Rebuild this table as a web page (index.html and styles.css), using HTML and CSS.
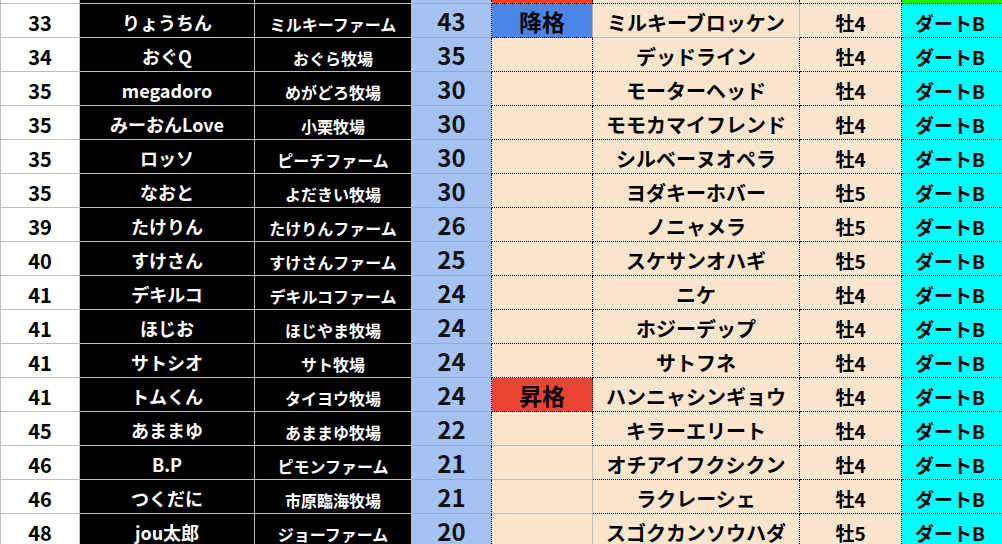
FILE: index.html
```html
<!DOCTYPE html>
<html lang="ja">
<head>
<meta charset="utf-8">
<title>ランキング</title>
<link rel="stylesheet" href="styles.css">
</head>
<body>
<div class="sheet">
  <div class="row top">
    <div class="cell a"></div><div class="cell b"></div><div class="cell c"></div><div class="cell d"></div>
    <div class="cell e up"></div><div class="cell f"></div><div class="cell g"></div><div class="cell h green"></div>
  </div>
  <div class="row">
    <div class="cell a">33</div><div class="cell b">りょうちん</div><div class="cell c">ミルキーファーム</div><div class="cell d">43</div>
    <div class="cell e down">降格</div><div class="cell f solid">ミルキーブロッケン</div><div class="cell g">牡4</div><div class="cell h">ダートB</div>
  </div>
  <div class="row">
    <div class="cell a">34</div><div class="cell b">おぐQ</div><div class="cell c">おぐら牧場</div><div class="cell d">35</div>
    <div class="cell e"></div><div class="cell f">デッドライン</div><div class="cell g">牡4</div><div class="cell h">ダートB</div>
  </div>
  <div class="row">
    <div class="cell a">35</div><div class="cell b">megadoro</div><div class="cell c">めがどろ牧場</div><div class="cell d">30</div>
    <div class="cell e"></div><div class="cell f">モーターヘッド</div><div class="cell g">牡4</div><div class="cell h">ダートB</div>
  </div>
  <div class="row">
    <div class="cell a">35</div><div class="cell b">みーおんLove</div><div class="cell c">小栗牧場</div><div class="cell d">30</div>
    <div class="cell e"></div><div class="cell f">モモカマイフレンド</div><div class="cell g">牡4</div><div class="cell h">ダートB</div>
  </div>
  <div class="row">
    <div class="cell a">35</div><div class="cell b">ロッソ</div><div class="cell c">ピーチファーム</div><div class="cell d">30</div>
    <div class="cell e"></div><div class="cell f">シルベーヌオペラ</div><div class="cell g">牡4</div><div class="cell h">ダートB</div>
  </div>
  <div class="row">
    <div class="cell a">35</div><div class="cell b">なおと</div><div class="cell c">よだきい牧場</div><div class="cell d">30</div>
    <div class="cell e"></div><div class="cell f">ヨダキーホバー</div><div class="cell g">牡5</div><div class="cell h">ダートB</div>
  </div>
  <div class="row">
    <div class="cell a">39</div><div class="cell b">たけりん</div><div class="cell c">たけりんファーム</div><div class="cell d">26</div>
    <div class="cell e"></div><div class="cell f">ノニャメラ</div><div class="cell g">牡5</div><div class="cell h">ダートB</div>
  </div>
  <div class="row">
    <div class="cell a">40</div><div class="cell b">すけさん</div><div class="cell c">すけさんファーム</div><div class="cell d">25</div>
    <div class="cell e"></div><div class="cell f">スケサンオハギ</div><div class="cell g">牡5</div><div class="cell h">ダートB</div>
  </div>
  <div class="row">
    <div class="cell a">41</div><div class="cell b">デキルコ</div><div class="cell c">デキルコファーム</div><div class="cell d">24</div>
    <div class="cell e"></div><div class="cell f">ニケ</div><div class="cell g">牡4</div><div class="cell h">ダートB</div>
  </div>
  <div class="row">
    <div class="cell a">41</div><div class="cell b">ほじお</div><div class="cell c">ほじやま牧場</div><div class="cell d">24</div>
    <div class="cell e"></div><div class="cell f">ホジーデップ</div><div class="cell g">牡4</div><div class="cell h">ダートB</div>
  </div>
  <div class="row">
    <div class="cell a">41</div><div class="cell b">サトシオ</div><div class="cell c">サト牧場</div><div class="cell d">24</div>
    <div class="cell e"></div><div class="cell f">サトフネ</div><div class="cell g">牡4</div><div class="cell h">ダートB</div>
  </div>
  <div class="row">
    <div class="cell a">41</div><div class="cell b">トムくん</div><div class="cell c">タイヨウ牧場</div><div class="cell d">24</div>
    <div class="cell e up">昇格</div><div class="cell f">ハンニャシンギョウ</div><div class="cell g">牡4</div><div class="cell h">ダートB</div>
  </div>
  <div class="row">
    <div class="cell a">45</div><div class="cell b">あままゆ</div><div class="cell c">あままゆ牧場</div><div class="cell d">22</div>
    <div class="cell e grey-bottom"></div><div class="cell f">キラーエリート</div><div class="cell g">牡4</div><div class="cell h">ダートB</div>
  </div>
  <div class="row">
    <div class="cell a">46</div><div class="cell b">B.P</div><div class="cell c">ピモンファーム</div><div class="cell d">21</div>
    <div class="cell e grey"></div><div class="cell f">オチアイフクシクン</div><div class="cell g">牡4</div><div class="cell h">ダートB</div>
  </div>
  <div class="row">
    <div class="cell a">46</div><div class="cell b">つくだに</div><div class="cell c">市原臨海牧場</div><div class="cell d">21</div>
    <div class="cell e grey"></div><div class="cell f">ラクレーシェ</div><div class="cell g">牡4</div><div class="cell h">ダートB</div>
  </div>
  <div class="row">
    <div class="cell a">48</div><div class="cell b">jou太郎</div><div class="cell c">ジョーファーム</div><div class="cell d">20</div>
    <div class="cell e grey-side"></div><div class="cell f">スゴクカンソウハダ</div><div class="cell g">牡5</div><div class="cell h">ダートB</div>
  </div>
</div>
</body>
</html>
```

FILE: styles.css
```css
html, body {
  margin: 0;
  padding: 0;
  background: #ffffff;
  overflow: hidden;
}

.sheet {
  width: 1002px;
  height: 544px;
  overflow: hidden;
  font-family: "Noto Sans CJK JP", "Noto Sans", sans-serif;
  font-weight: 700;
}

.row {
  display: grid;
  grid-template-columns: 80px 175px 157px 80px 101px 207px 102px 110px;
  height: 34px;
}

.row.top {
  height: 4px;
}

.cell {
  box-sizing: border-box;
  display: flex;
  align-items: center;
  justify-content: center;
  white-space: nowrap;
  line-height: 1;
  border-right: 1px solid #c0c0c0;
  border-bottom: 1px solid #c0c0c0;
  color: #000000;
}

.top .cell {
  padding: 0;
}

.a {
  background: #ffffff;
  border-left: 1px solid #c0c0c0;
  font-size: 20px;
  padding-top: 4px;
}

.b {
  background: #000000;
  color: #ffffff;
  font-size: 18px;
  padding-top: 3px;
}

.c {
  background: #000000;
  color: #ffffff;
  font-size: 16px;
  padding-top: 7px;
}

.d {
  background: #a4c2f4;
  border-bottom-color: #8eaadc;
  border-right: 1px dotted #000000;
  font-size: 24px;
  padding-top: 0;
  color: #111111;
}

.e {
  background: #fce5cd;
  border-right: 1px dotted #000000;
  border-bottom: 1px dotted #000000;
  font-size: 23px;
  padding-top: 1px;
}

.e.down {
  background: #4a86e8;
  border-right-color: #b0b0b0;
  border-right-style: solid;
}

.e.up {
  background: #ea4335;
}

.e.grey-bottom {
  border-bottom: 1px solid #c0c0c0;
}

.e.grey {
  border-right: 1px solid #c0c0c0;
  border-bottom: 1px solid #c0c0c0;
}

.e.grey-side {
  border-right: 1px solid #c0c0c0;
}

.f {
  background: #fce5cd;
  border-right: 1px dotted #000000;
  border-bottom: 1px dotted #000000;
  font-size: 20px;
  padding-top: 4px;
}

.f.solid {
  border-bottom: 1px solid #c0c0c0;
  border-right: 1px solid #c0c0c0;
}

.g {
  background: #fce5cd;
  border-right: 1px dotted #000000;
  border-bottom: 1px dotted #000000;
  font-size: 19px;
  padding-top: 4px;
}

.h {
  background: #00ffff;
  border-right: none;
  border-bottom: 1px dotted #000000;
  font-size: 19px;
  padding-top: 4px;
  justify-content: flex-start;
  padding-left: 13px;
}

.h.green {
  background: #00ff00;
}
```
